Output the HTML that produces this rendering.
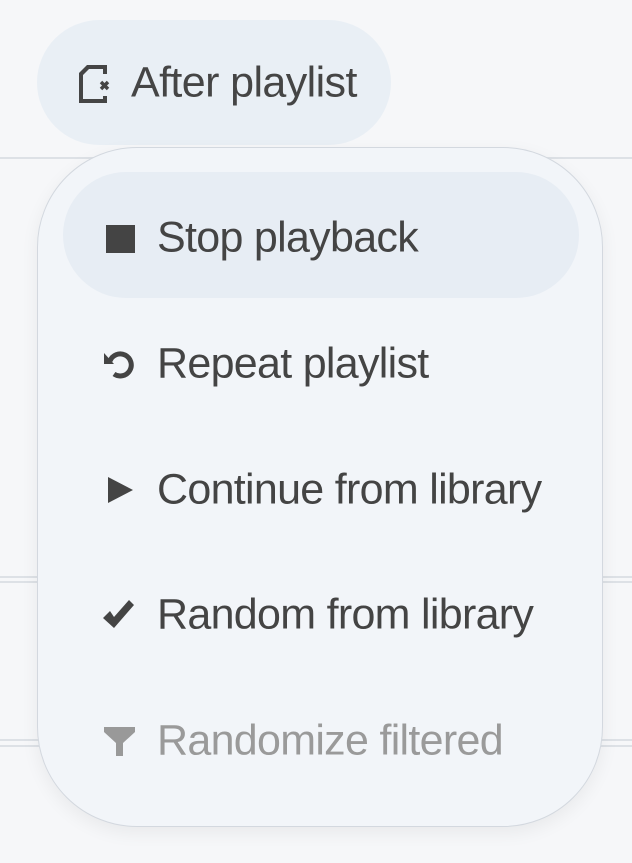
<!DOCTYPE html>
<html><head><style>
html,body{margin:0;padding:0;width:632px;height:863px;background:#f6f7f9;overflow:hidden;font-family:"Liberation Sans",sans-serif;}
.line{position:absolute;left:0;width:632px;height:2px;background:#dde1e6;}
.btn{position:absolute;left:37px;top:20px;width:354px;height:125px;border-radius:63px;background:#e9eff5;}
.btn span{position:absolute;left:94px;top:63px;transform:translateY(-50%);font-size:43px;color:#454545;letter-spacing:-0.6px;}
.menu{position:absolute;left:37px;top:147px;width:564px;height:678px;border:1.5px solid #d3d8df;border-radius:100px;background:#f2f5f9;box-shadow:0 6px 18px rgba(0,0,0,0.06);}
.hi{position:absolute;left:25px;top:24px;width:516px;height:126px;border-radius:63px;background:#e7edf4;}
.item{position:absolute;left:0;height:126px;width:564px;}
.item span{position:absolute;left:119px;top:63px;transform:translateY(-50%);font-size:43px;color:#444;letter-spacing:-0.7px;white-space:nowrap;}
.item svg{position:absolute;left:64px;top:46px;}
.dis span{color:#9a9a9a}
</style></head><body>
<div class="line" style="top:157px"></div>
<div class="line" style="top:576px"></div>
<div class="line" style="top:581px"></div>
<div class="line" style="top:739px"></div>
<div class="line" style="top:745px"></div>
<div class="btn">
<svg style="position:absolute;left:40px;top:42px" width="36" height="44" viewBox="0 0 36 44"><path d="M10 3H30V12H26V7H12L6 13V37H26V34H30V41H2V11Z" fill="#454545"/><path d="M24 20l7 7M31 20l-7 7" stroke="#454545" stroke-width="3.5"/></svg>
<span>After playlist</span></div>
<div class="menu">
<div class="hi"></div>
<div class="item" style="top:27px"><svg width="34" height="34"><rect x="4" y="4" width="29" height="28" fill="#444"/></svg><span>Stop playback</span></div>
<div class="item" style="top:153px"><svg width="34" height="34" viewBox="0 0 34 34"><path d="M8 14A11 11 0 1 1 12 27" fill="none" stroke="#444" stroke-width="5"/><path d="M2 6L12 17L2 17Z" fill="#444"/></svg><span>Repeat playlist</span></div>
<div class="item" style="top:279px"><svg width="34" height="34"><path d="M6 4L31 17L6 30Z" fill="#444"/></svg><span>Continue from library</span></div>
<div class="item" style="top:404px"><svg width="36" height="34" viewBox="0 0 36 34"><path d="M1 20L8 13L12 19L27 2L32 7L12 30Z" fill="#444"/></svg><span>Random from library</span></div>
<div class="item dis" style="top:530px"><svg width="34" height="36" viewBox="0 0 34 36"><path d="M2 3H33V8L21 19V32H14V19L2 8Z" fill="#999"/></svg><span>Randomize filtered</span></div>
</div>
</body></html>
